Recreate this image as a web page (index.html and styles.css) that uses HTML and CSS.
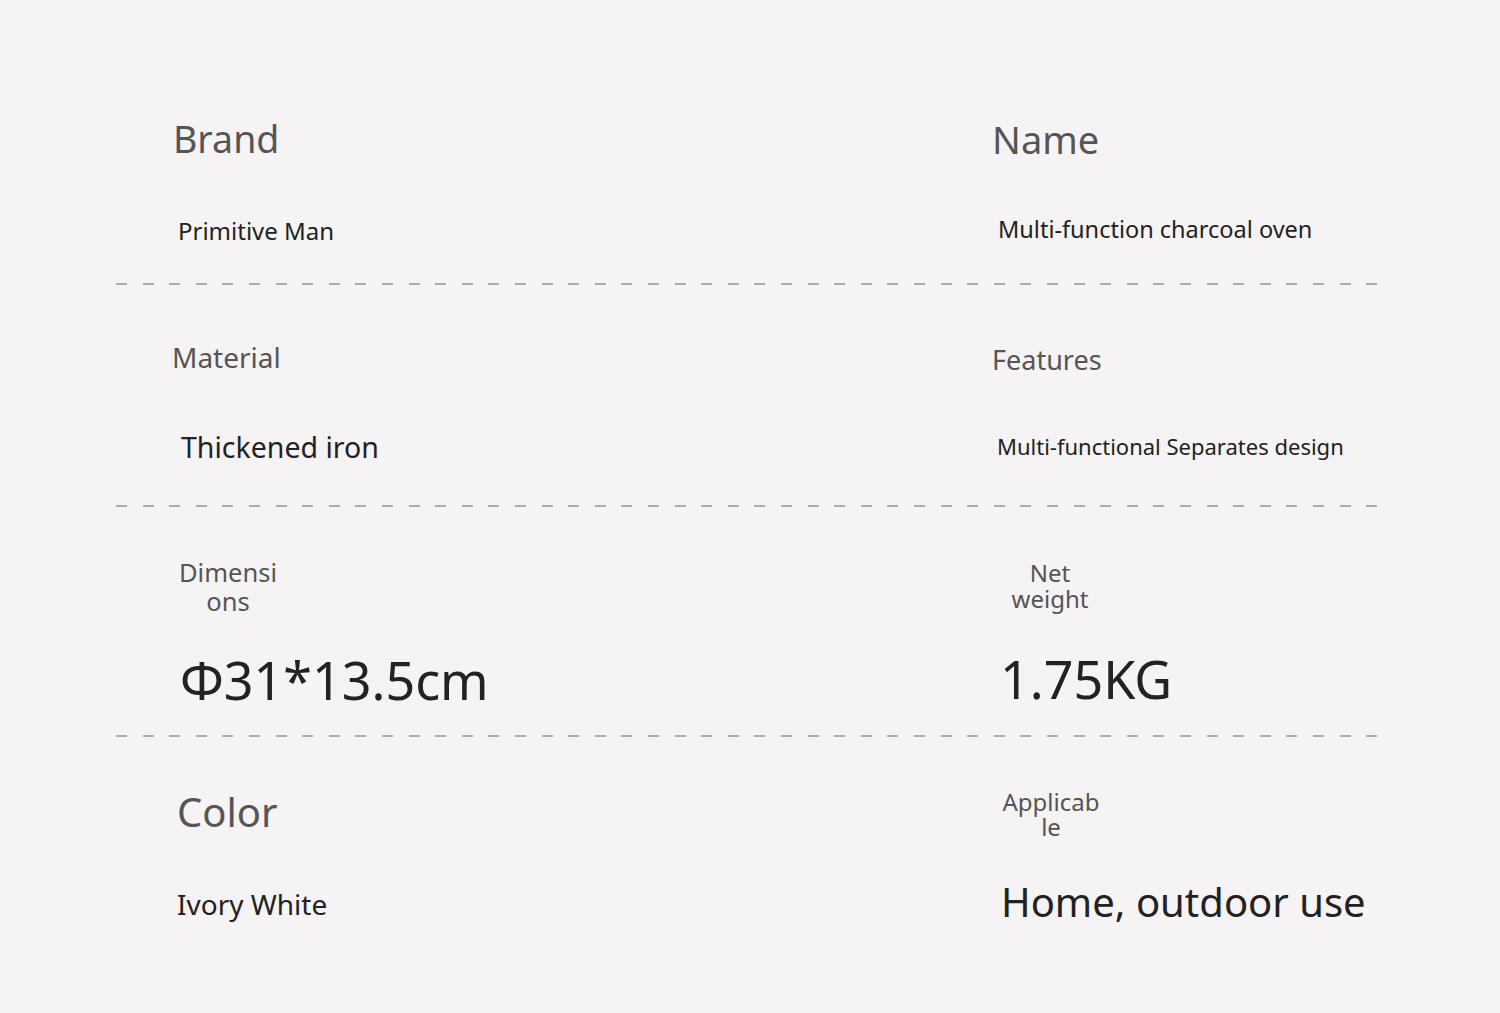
FILE: index.html
```html
<!DOCTYPE html>
<html lang="en">
<head>
<meta charset="utf-8">
<title>Product specifications</title>
<link rel="stylesheet" href="styles.css">
</head>
<body>
<main class="specs">
  <section class="row row-1">
    <div class="cell">
      <div class="label lbl-brand">Brand</div>
      <div class="value val-brand">Primitive Man</div>
    </div>
    <div class="cell">
      <div class="label lbl-name">Name</div>
      <div class="value val-name">Multi-function charcoal oven</div>
    </div>
  </section>
  <div class="divider"></div>
  <section class="row row-2">
    <div class="cell">
      <div class="label lbl-material">Material</div>
      <div class="value val-material">Thickened iron</div>
    </div>
    <div class="cell">
      <div class="label lbl-features">Features</div>
      <div class="value val-features">Multi-functional Separates design</div>
    </div>
  </section>
  <div class="divider"></div>
  <section class="row row-3">
    <div class="cell">
      <div class="label lbl-dim"><span class="ln">Dimensi</span><span class="ln">ons</span></div>
      <div class="value val-dim">Φ31*13.5cm</div>
    </div>
    <div class="cell">
      <div class="label lbl-weight"><span class="ln">Net</span><span class="ln">weight</span></div>
      <div class="value val-weight">1.75KG</div>
    </div>
  </section>
  <div class="divider"></div>
  <section class="row row-4">
    <div class="cell">
      <div class="label lbl-color">Color</div>
      <div class="value val-color">Ivory White</div>
    </div>
    <div class="cell">
      <div class="label lbl-app"><span class="ln">Applicab</span><span class="ln">le</span></div>
      <div class="value val-app">Home, outdoor use</div>
    </div>
  </section>
</main>
</body>
</html>
```

FILE: styles.css
```css
html, body {
  margin: 0;
  padding: 0;
  background: #f5f3f4;
}

body {
  font-family: "Noto Sans", "Open Sans", sans-serif;
  width: 1500px;
  height: 1013px;
  overflow: hidden;
}

.specs {
  padding-left: 116px;
  width: 1262px;
}

.row {
  display: grid;
  grid-template-columns: 876px 386px;
}

.row-1 { height: 283px; }
.row-2 { height: 220px; }
.row-3 { height: 228px; }
.row-4 { height: 276px; }

.cell {
  display: flex;
  flex-direction: column;
  align-items: flex-start;
}

.label {
  color: #555555;
  white-space: nowrap;
}

.value {
  color: #222222;
  white-space: nowrap;
}

.ln {
  display: block;
}

.divider {
  height: 2px;
  background: repeating-linear-gradient(to right, #acacac 0 11px, transparent 11px 26.6px);
}

/* Row 1 */
.lbl-brand { font-size: 37.5px; line-height: 38px; margin: 120px 0 0 57px; }
.val-brand { font-size: 24px; line-height: 24px; margin: 61px 0 0 62px; }
.lbl-name { font-size: 38px; line-height: 38px; margin: 120px 0 0 0; }
.val-name { font-size: 23.5px; line-height: 24px; margin: 59px 0 0 6px; }

/* Row 2 */
.lbl-material { font-size: 28px; line-height: 28px; margin: 58px 0 0 56px; }
.val-material { font-size: 28.5px; line-height: 28px; margin: 62px 0 0 65px; }
.lbl-features { font-size: 27px; line-height: 27px; margin: 61px 0 0 0; }
.val-features { font-size: 22px; line-height: 22px; margin: 62px 0 0 5px; }

/* Row 3 */
.lbl-dim {
  font-size: 25.5px;
  text-align: center;
  width: 110px;
  margin: 48px 0 0 57px;
}
.lbl-dim .ln { height: 29px; line-height: 35px; }
.val-dim {
  font-size: 52px;
  line-height: 52px;
  margin: 41px 0 0 64px;
}
.lbl-weight {
  font-size: 24px;
  text-align: center;
  width: 110px;
  margin: 49px 0 0 3px;
}
.lbl-weight .ln { height: 26px; line-height: 33px; }
.val-weight {
  font-size: 52px;
  line-height: 52px;
  margin: 45px 0 0 8px;
}

/* Row 4 */
.lbl-color { font-size: 40px; line-height: 40px; margin: 55px 0 0 61px; }
.val-color { font-size: 28px; line-height: 28px; margin: 58px 0 0 61px; }
.lbl-app {
  font-size: 24px;
  text-align: center;
  width: 118px;
  margin: 48px 0 0 0;
}
.lbl-app .ln { height: 25px; line-height: 33px; }
.val-app { font-size: 40px; line-height: 40px; margin: 47px 0 0 9px; }
```
